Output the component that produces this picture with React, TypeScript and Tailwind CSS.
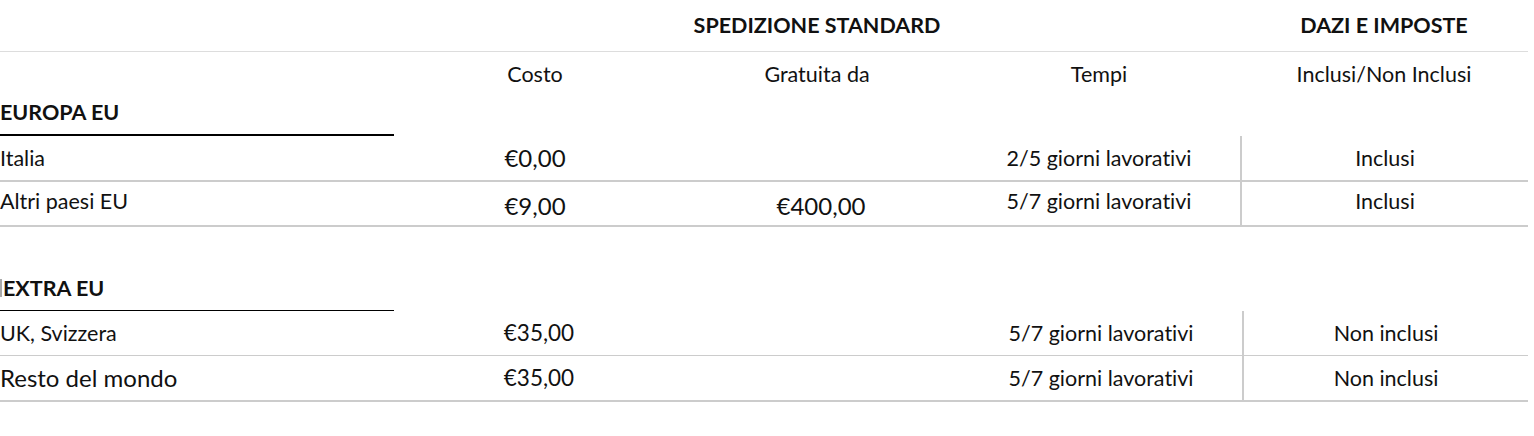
type Row = {
  name: string;
  nameClass?: string;
  cost: string;
  costClass?: string;
  free?: string;
  time: string;
  duties: string;
  rowClass: string;
};

const europe: Row[] = [
  {
    name: "Italia",
    cost: "€0,00",
    costClass: "text-[24px]",
    time: "2/5 giorni lavorativi",
    duties: "Inclusi",
    rowClass: "h-[46px] border-b-2",
  },
  {
    name: "Altri paesi EU",
    nameClass: "pb-1",
    cost: "€9,00",
    costClass: "text-[24px] pt-1",
    free: "€400,00",
    time: "5/7 giorni lavorativi",
    duties: "Inclusi",
    rowClass: "h-[45px] border-b-2",
  },
];

const extra: Row[] = [
  {
    name: "UK, Svizzera",
    cost: "€35,00",
    costClass: "text-[22.5px] pl-2",
    time: "5/7 giorni lavorativi",
    duties: "Non inclusi",
    rowClass: "h-[45px] border-b",
  },
  {
    name: "Resto del mondo",
    nameClass: "text-[24px]",
    cost: "€35,00",
    costClass: "text-[22.5px] pl-2",
    time: "5/7 giorni lavorativi",
    duties: "Non inclusi",
    rowClass: "h-[46px] border-b-2",
  },
];

const cols = "grid grid-cols-[394px_282px_282px_282px_288px]";

function Section({ title, rows, extraEu }: { title: string; rows: Row[]; extraEu?: boolean }) {
  return (
    <div>
      <div className={`${cols} h-[44px] items-center`}>
        <div className="font-bold flex items-center">
          {extraEu && <span className="inline-block w-[2px] h-[18px] bg-[#aaaaaa] mr-[1px]" />}
          {title}
        </div>
      </div>
      <div className={cols}>
        <div className={`bg-black ${extraEu ? "h-px" : "h-[2px]"}`} />
      </div>
      {rows.map((r) => (
        <div key={r.name} className={`${cols} items-center border-[#cccccc] ${r.rowClass}`}>
          <div className={r.nameClass ?? ""}>{r.name}</div>
          <div className={`text-center ${r.costClass ?? ""}`}>{r.cost}</div>
          <div className="text-center text-[24px] pt-1 pl-2">{r.free ?? ""}</div>
          <div className={`text-center ${extraEu ? "pl-1" : ""} ${r.nameClass === "pb-1" ? "pb-1" : ""}`}>
            {r.time}
          </div>
          <div
            className={`h-full flex items-center justify-center border-l-2 border-[#cccccc] ${extraEu ? "ml-[2px]" : ""}`}
          >
            <span className={r.nameClass === "pb-1" ? "pb-1" : ""}>{r.duties}</span>
          </div>
        </div>
      ))}
    </div>
  );
}

export default function App() {
  return (
    <div className="w-[1534px] h-[436px] bg-white text-[#111111] font-['Lato',sans-serif] text-[21.5px] [font-variant-ligatures:none] overflow-hidden">
      <div className="w-[1528px]">
        <div className={`${cols} h-[52px] items-center border-b border-[#dddddd] font-bold`}>
          <div />
          <div />
          <div className="text-center">SPEDIZIONE STANDARD</div>
          <div />
          <div className="text-center">DAZI E IMPOSTE</div>
        </div>
        <div className={`${cols} h-[38px] items-start pt-[6px]`}>
          <div />
          <div className="text-center">Costo</div>
          <div className="text-center">Gratuita da</div>
          <div className="text-center">Tempi</div>
          <div className="text-center">Inclusi/Non Inclusi</div>
        </div>
        <Section title="EUROPA EU" rows={europe} />
        <div className="h-[39px]" />
        <Section title="EXTRA EU" rows={extra} extraEu />
      </div>
    </div>
  );
}
